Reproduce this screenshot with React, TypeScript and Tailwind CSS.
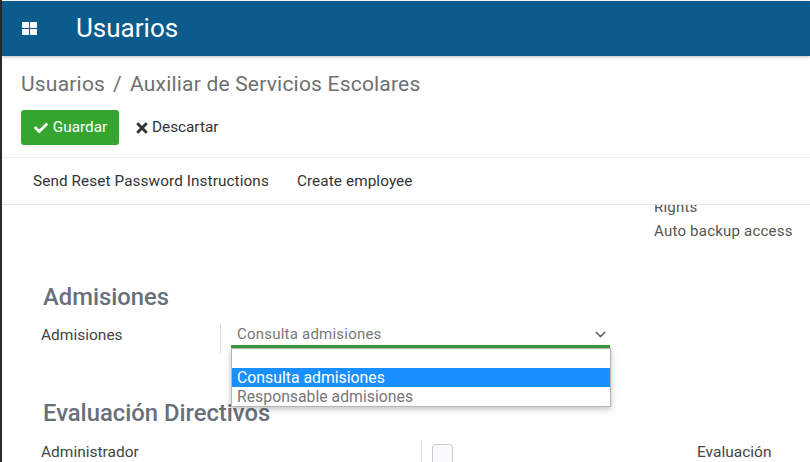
import { FaCheck, FaTimes, FaThLarge } from "react-icons/fa";
import { LuChevronDown } from "react-icons/lu";

export default function App() {
  return (
    <div className="flex h-[462px] w-[810px] overflow-hidden bg-white font-['Roboto',sans-serif]">
      <div className="w-[2px] shrink-0 bg-[#2a2a2a]" />
      <div className="flex min-w-0 flex-1 flex-col">
        <div className="h-px bg-white" />
        <header className="flex h-[55px] shrink-0 items-center bg-[#0b5c8c] shadow-[0_1px_3px_rgba(0,0,0,0.25)]">
          <FaThLarge className="ml-[20px] text-[15px] text-white" />
          <span className="ml-[39px] text-[26px] text-white">Usuarios</span>
        </header>
        <div className="shrink-0 border-b border-[#e5e5e5]">
          <div className="pl-[19px] pt-[14px] text-[21px] leading-[28px] tracking-[0.2px] text-[#6f6f6f]">
            <span>Usuarios</span>
            <span className="mx-[8px]">/</span>
            <span>Auxiliar de Servicios Escolares</span>
          </div>
          <div className="mt-[12px] flex items-center pl-[19px]">
            <button className="flex h-[35px] w-[98px] items-center justify-center gap-[5px] rounded-[3px] bg-[#36a52f] pl-px text-[15.3px] text-white">
              <FaCheck className="text-[14px]" />
              Guardar
            </button>
            <button className="ml-[15px] flex items-center gap-[2px] text-[15.3px] text-[#333333]">
              <FaTimes className="text-[16px]" />
              Descartar
            </button>
          </div>
          <div className="mt-[12px] flex h-[47px] items-center gap-[28px] border-t border-[#eeeeee] pl-[31px] text-[15.3px] tracking-[0.1px] text-[#333333]">
            <span>Send Reset Password Instructions</span>
            <span>Create employee</span>
          </div>
        </div>
        <main className="relative min-h-0 flex-1 overflow-hidden">
          <div className="-mt-[10px] pl-[652px] text-[15px] leading-[24px] tracking-[0.22px] text-[#555555]">
            <div>Rights</div>
            <div className="whitespace-nowrap">Auto backup access</div>
          </div>
          <h2 className="ml-[41px] mt-[40px] text-[23.8px] font-medium leading-[28px] text-[#677079]">Admisiones</h2>
          <div className="mt-[13px] flex h-[30px] items-start">
            <span className="ml-[39px] w-[179px] text-[15.5px] leading-[22px] text-[#444444]">Admisiones</span>
            <div className="h-[30px] w-px bg-[#dddddd]" />
            <div className="ml-[10px] flex h-[24px] w-[379px] items-center justify-between border-b-[3px] border-[#3f9a3a] pl-[6px] pr-[1px] text-[15px] tracking-[0.22px] text-[#777777]">
              <span>Consulta admisiones</span>
              <LuChevronDown className="text-[17px] text-[#666666]" />
            </div>
          </div>
          <h2 className="ml-[41px] mt-[45px] whitespace-nowrap text-[23.8px] font-medium leading-[28px] text-[#677079]">Evaluación Directivos</h2>
          <div className="mt-[13px] flex h-[32px] items-start">
            <span className="ml-[39px] mt-px w-[380px] text-[15.5px] leading-[22px] text-[#444444]">Administrador</span>
            <div className="h-[32px] w-px bg-[#dddddd]" />
            <div className="ml-[10px] mt-[4px] h-[24px] w-[21px] rounded-[3px] border border-[#c8ccd0] bg-[#fbfbfd]" />
            <span className="ml-[244px] mt-px text-[15.5px] leading-[22px] text-[#444444]">Evaluación</span>
          </div>
          <div className="absolute left-[229px] top-[143px] w-[380px] border border-[#b5b5b5] bg-white text-[15.8px] leading-[19px] shadow-[0_2px_6px_rgba(0,0,0,0.25)]">
            <div className="h-[19px]" />
            <div className="bg-[#1a8fff] pl-[5px] text-white">Consulta admisiones</div>
            <div className="pl-[5px] text-[#777777]">Responsable admisiones</div>
          </div>
        </main>
      </div>
    </div>
  );
}
